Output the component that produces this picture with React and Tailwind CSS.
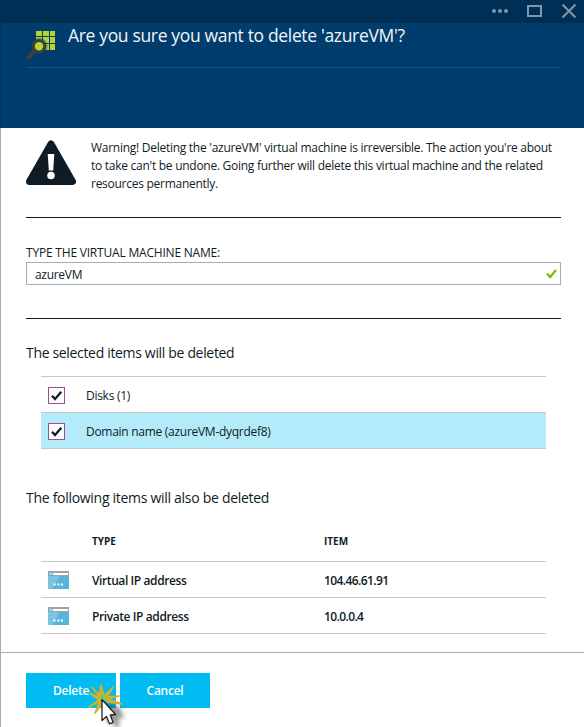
import React from "react";

function TitleBar() {
  return (
    <div className="flex h-[23px] items-start justify-end bg-[#002f55]">
      <svg className="h-[23px] w-[104px]" viewBox="480 0 104 23">
        <g fill="#8097aa">
          <circle cx="494" cy="11" r="2" />
          <circle cx="500" cy="11" r="2" />
          <circle cx="506" cy="11" r="2" />
        </g>
        <rect x="528" y="6" width="13" height="10" fill="none" stroke="#8097aa" strokeWidth="2" />
        <path d="M562.5 4.5 L575.5 17.5 M575.5 4.5 L562.5 17.5" stroke="#8097aa" strokeWidth="2" />
      </svg>
    </div>
  );
}

function ResourceIcon() {
  return (
    <svg className="mt-[8px] h-[29px] w-[30px] shrink-0" viewBox="26 31 30 29">
      <g fill="#b8d432">
        <rect x="36" y="31" width="6" height="5" />
        <rect x="43" y="31" width="6" height="5" />
        <rect x="50" y="31" width="5" height="5" />
        <rect x="36" y="37" width="6" height="6" />
        <rect x="43" y="37" width="6" height="6" />
        <rect x="50" y="37" width="5" height="6" />
        <rect x="43" y="44" width="6" height="6" />
        <rect x="50" y="44" width="5" height="6" />
      </g>
      <circle cx="39" cy="46.3" r="8.6" fill="#003c6c" opacity="0.35" />
      <path d="M28.5 57.5 L34 52" stroke="#3e3e40" strokeWidth="4" strokeLinecap="round" />
      <circle cx="39" cy="46.3" r="5.8" fill="#b8d432" stroke="#3e3e40" strokeWidth="3.2" />
    </svg>
  );
}

function WarningIcon() {
  return (
    <svg className="mt-px h-[46px] w-[50px] shrink-0" viewBox="0 0 50 46">
      <path d="M25 4 L46.500 41.500 H3.500 Z" fill="#0f1b25" stroke="#0f1b25" strokeWidth="7" strokeLinejoin="round" />
      <path d="M21.700 14 H28.300 L27.200 30.500 H22.800 Z" fill="#fff" />
      <circle cx="25" cy="35.500" r="3.800" fill="#fff" />
    </svg>
  );
}

function CheckRow({ label, selected }) {
  return (
    <div className={"flex h-[36px] items-center border-b border-[#c8c8cb] pl-[7px] " + (selected ? "bg-[#b3ebfb]" : "")}>
      <div className="mt-px h-[17px] w-[17px] border border-[#9b4f96] bg-white">
        <svg className="h-[15px] w-[15px]" viewBox="0 0 15 15">
          <path d="M3 7.800 L6 11 L12.300 3.800" fill="none" stroke="#0f1b25" strokeWidth="2.200" />
        </svg>
      </div>
      <span className="ml-[21px] pt-[2px] text-[12px] leading-[18px]">{label}</span>
    </div>
  );
}

function AddressIcon() {
  return (
    <svg className="mt-px h-[18px] w-[21px]" viewBox="0 0 21 18">
      <rect width="21" height="18" fill="#59b4d9" />
      <path d="M0 0 H15 L4 18 H0 Z" fill="#7ac3e1" />
      <rect width="21" height="5" fill="#a0a1a2" />
      <rect x="5" y="2" width="15" height="2" fill="#fff" />
      <circle cx="2.800" cy="2.800" r="1.700" fill="#b3ebfb" stroke="#59b4d9" strokeWidth="1" />
      <g fill="#fff">
        <rect x="5.500" y="12.500" width="2" height="2" />
        <rect x="9.500" y="12.500" width="2" height="2" />
        <rect x="13" y="12.500" width="2" height="2" />
      </g>
    </svg>
  );
}

function AddressRow({ type, item }) {
  return (
    <div className="flex h-[36px] items-center border-b border-[#c8c8cb] pl-[7px] text-[12px] font-semibold leading-[18px]">
      <AddressIcon />
      <span className="ml-[23px] w-[232px] pt-[2px] tracking-[-0.4px]">{type}</span>
      <span className="pt-[2px] tracking-[-0.6px]">{item}</span>
    </div>
  );
}

function ClickPointer() {
  return (
    <svg className="absolute -right-[10px] top-[10px] h-[44px] w-[42px] overflow-visible" viewBox="84 683 42 44">
      <defs>
        <filter id="shadow" x="-50%" y="-50%" width="200%" height="200%">
          <feGaussianBlur stdDeviation="2" />
        </filter>
      </defs>
      <path d="M107 702 L107 724 L112 721 L115 728 L120 726 L118 719 L124 718 L120 708 Z" fill="#333" opacity="0.5" filter="url(#shadow)" />
      <path
        d="M102 698 L92 687 L99 696 L101 685 L104 696 L113 687 L107 697 L119 696 L108 699 L122 704 L107 702 M102 699 L90 693 L99 700 L89 707 L100 701 L95 713 L103 703"
        fill="#d8b62c"
        fillOpacity="0.8"
        stroke="#d8b020"
        strokeWidth="1.700"
        strokeLinejoin="round"
      />
      <circle cx="103" cy="698.500" r="3" fill="#7fc36d" />
      <path
        d="M102 699.500 L102 720.500 L106.500 716.500 L109.500 723.800 L113 722.300 L110.300 715 L115.500 714.500 Z"
        fill="#fff"
        stroke="#222"
        strokeWidth="1.300"
        strokeLinejoin="round"
      />
    </svg>
  );
}

export default function App() {
  return (
    <div className="flex h-[727px] w-[584px] flex-col overflow-hidden bg-white font-['Open_Sans','Noto_Sans',sans-serif] text-[#0f1b25]">
      <TitleBar />
      <header className="h-[105px] border-l border-[#003562] bg-[#003c6c] pl-[25px] pr-[25px]">
        <div className="flex h-[45px] border-b border-[#1c5080]">
          <ResourceIcon />
          <h1 className="ml-[12px] whitespace-nowrap text-[17.5px] leading-[24px] tracking-[-0.34px] text-[#f2f5f8]">
            Are you sure you want to delete 'azureVM'?
          </h1>
        </div>
      </header>

      <main className="h-[524px] border-l border-[#a9adb3] pl-[25px] pr-[23px]">
        <section className="flex h-[90px] border-b border-[#0f1b25] pt-[11px]">
          <WarningIcon />
          <p className="ml-[15px] whitespace-nowrap text-[12px] leading-[18px] tracking-[-0.27px]">
            Warning! Deleting the 'azureVM' virtual machine is irreversible. The action you're about
            <br />
            to take can't be undone. Going further will delete this virtual machine and the related
            <br />
            resources permanently.
          </p>
        </section>

        <section className="h-[101px] border-b border-[#0f1b25] pt-[26px]">
          <div className="text-[12px] leading-[18px] tracking-[-0.2px]">TYPE THE VIRTUAL MACHINE NAME:</div>
          <div className="flex h-[23px] items-center justify-between border border-[#a9adb3] pl-[8px] pr-[3px] text-[12px]">
            <span className="pt-[2px] leading-[18px] tracking-[-0.3px]">azureVM</span>
            <svg className="h-[10px] w-[11px]" viewBox="0 0 11 10">
              <path d="M1 4.500 L4.200 8 L10 1" fill="none" stroke="#7fba00" strokeWidth="2.200" />
            </svg>
          </div>
        </section>

        <h2 className="mt-[24px] text-[14px] leading-[20px] tracking-[-0.33px]">The selected items will be deleted</h2>
        <div className="ml-[15px] mr-[15px] mt-[13px] border-t border-[#c8c8cb] tracking-[-0.28px]">
          <CheckRow label="Disks (1)" />
          <CheckRow label="Domain name (azureVM-dyqrdef8)" selected />
        </div>

        <h2 className="mt-[39px] text-[14px] leading-[20px] tracking-[-0.29px]">The following items will also be deleted</h2>
        <div className="ml-[15px] mr-[15px] mt-[23px]">
          <div className="flex h-[31px] border-b border-[#c8c8cb] pl-[51px] text-[10px] font-bold leading-[20px]">
            <span className="w-[232px]">TYPE</span>
            <span>ITEM</span>
          </div>
          <AddressRow type="Virtual IP address" item="104.46.61.91" />
          <AddressRow type="Private IP address" item="10.0.0.4" />
        </div>
      </main>

      <footer className="flex h-[75px] gap-[4px] border-l border-t border-[#a9adb3] pl-[25px] pt-[20px] text-[12px] font-semibold tracking-[-0.25px] text-white">
        <div className="relative flex h-[35px] w-[90px] items-center justify-center bg-[#00bcf2]">
          Delete
          <ClickPointer />
        </div>
        <div className="flex h-[35px] w-[90px] items-center justify-center bg-[#00bcf2]">Cancel</div>
      </footer>
    </div>
  );
}
